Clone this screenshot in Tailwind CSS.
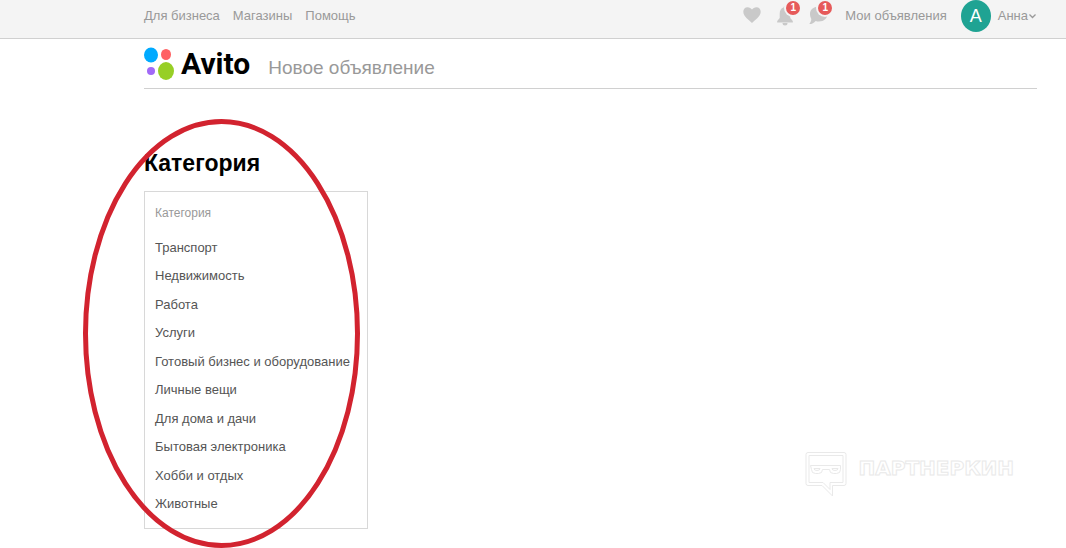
<!DOCTYPE html>
<html lang="ru">
<head>
  <meta charset="UTF-8">
  <meta name="viewport" content="width=device-width, initial-scale=1.0">
  <title>Новое объявление</title>
  <script src="https://cdn.jsdelivr.net/npm/@tailwindcss/browser@4"></script>
</head>
<body class="relative min-h-screen overflow-x-hidden bg-white font-['Liberation_Sans',Arial,sans-serif]">
  <header class="border-b border-[#d0d0d0] bg-[#f4f4f4] pl-36 pr-[29px] text-[13px] text-[#999]">
    <div class="flex h-[38px] justify-between">
      <nav class="flex gap-[13px] pt-1">
        <a href="#" class="leading-6">Для бизнеса</a>
        <a href="#" class="leading-6">Магазины</a>
        <a href="#" class="leading-6">Помощь</a>
      </nav>
      <div class="flex pt-1">
        <a href="#" aria-label="Избранное" class="mr-4 pt-[3px]">
          <svg class="h-4 w-[18px]" viewBox="0 0 18 16" fill="#c9c9c9"><path d="M9 16C6.500 13.500.3 9.500.3 4.800.3 2 2 .2 4.500.2 6.500.2 8.200 1.200 9 2.500 9.800 1.200 11.500.2 13.500.2 16 .2 17.700 2 17.700 4.800 17.700 9.500 11.500 13.500 9 16z"/></svg>
        </a>
        <a href="#" aria-label="Уведомления" class="relative mr-4">
          <svg class="h-[22px] w-4" viewBox="0 0 16 22" fill="#c9c9c9"><path d="M8 2c.8 0 1.400.6 1.400 1.400C12 4.200 13.300 6.500 13.300 9.500V14l2.500 3v1.500H.2V17l2.500-3V9.500c0-3 1.300-5.300 3.900-6.100C6.600 2.600 7.200 2 8 2z"/><path d="M5.500 19h5a2.500 2.500 0 0 1-5 0z"/></svg>
          <span class="absolute -right-[7px] -top-[3px] size-[14px] rounded-full bg-[#e65a5a] text-center text-[10px] font-bold leading-[14px] text-white ring-2 ring-[#f4f4f4]">1</span>
        </a>
        <a href="#" aria-label="Сообщения" class="relative mr-4">
          <svg class="h-[22px] w-5" viewBox="0 0 20 22" fill="#c9c9c9"><path d="M10 2.500c5 0 8.500 3 8.500 7.300 0 4.500-3.500 7.700-8.500 7.700-1.300 0-2.200-.2-3.300-.6C5 19 3 20 .3 20c1.300-1.500 2-3.300 2-5C1.500 13.500 1 11.800 1 9.800c0-4.300 4-7.300 9-7.300z"/></svg>
          <span class="absolute -right-[3px] -top-[3px] size-[14px] rounded-full bg-[#e65a5a] text-center text-[10px] font-bold leading-[14px] text-white ring-2 ring-[#f4f4f4]">1</span>
        </a>
        <a href="#" class="mr-[14px] leading-6">Мои объявления</a>
        <span class="-mt-1 mr-[7px] h-8 w-[30px] rounded-[50%] bg-[#1fa393] text-center text-lg leading-8 text-white">А</span>
        <button type="button" class="flex h-6 items-center">Анна
          <svg class="h-2 w-[9px]" viewBox="0 0 9 8" fill="none" stroke="#999" stroke-width="1.300"><path d="M1.500 2.500l3 3 3-3"/></svg>
        </button>
      </div>
    </div>
  </header>

  <main class="pl-36 pr-[29px]">
    <div class="flex h-[50px] items-center border-b border-[#d0d0d0]">
      <a href="#" class="flex items-center gap-[6px]">
        <svg class="h-[34px] w-[31px]" viewBox="0 0 31 34"><ellipse cx="7" cy="8" rx="7" ry="7.500" fill="#0af"/><ellipse cx="22" cy="7.500" rx="5" ry="5.500" fill="#ff6163"/><circle cx="7" cy="24" r="4" fill="#a169f7"/><ellipse cx="22" cy="24" rx="8" ry="9" fill="#97cf26"/></svg>
        <span class="font-[Roboto,sans-serif] text-[30px] font-bold leading-8 text-black">Avito</span>
      </a>
      <span class="ml-[18px] mt-2 text-[19px] leading-7 text-[#999]">Новое объявление</span>
    </div>

    <h1 class="mt-[58px] text-[23px] font-bold leading-8 text-black">Категория</h1>
    <section class="mt-3 w-56 border border-[#d8d8d8] px-[10px] pb-[14px] pt-[11px] text-[13px] text-[#555]">
      <h2 class="text-xs leading-5 text-[#999]">Категория</h2>
      <ul class="mt-[15px] flex h-[276px] flex-col justify-between whitespace-nowrap leading-5">
        <li><a href="#">Транспорт</a></li>
        <li><a href="#">Недвижимость</a></li>
        <li><a href="#">Работа</a></li>
        <li><a href="#">Услуги</a></li>
        <li><a href="#">Готовый бизнес и оборудование</a></li>
        <li><a href="#">Личные вещи</a></li>
        <li><a href="#">Для дома и дачи</a></li>
        <li><a href="#">Бытовая электроника</a></li>
        <li><a href="#">Хобби и отдых</a></li>
        <li><a href="#">Животные</a></li>
      </ul>
    </section>
  </main>

  <!-- выделение блока категорий -->
  <svg class="pointer-events-none absolute left-[82px] top-[118px] h-[430px] w-[280px]" viewBox="0 0 280 430" fill="none" stroke="#d2232f" stroke-width="5"><ellipse cx="139.500" cy="215.500" rx="136" ry="212"/></svg>

  <!-- водяной знак -->
  <div class="pointer-events-none absolute right-[52px] top-[451px] flex gap-3">
    <svg class="h-[46px] w-[42px]" viewBox="0 0 42 46" fill="none" stroke="#e9e9e9"><path d="M3 1.500h36q2 0 2 2v29q0 2-2 2H27.500V45L17 34.500H3q-2 0-2-2v-29q0-2 2-2z"/><path d="M4 4.500h34v27H25v7l-7-7H4z"/><path d="M5.500 14.500h30v4q0 4-4 4h-3q-4 0-4-4h-7q0 4-4 4h-3q-4 0-4-4z"/><path d="M9 17.500h6q0 2-3 2t-3-2zM27 17.500h6q0 2-3 2t-3-2z"/></svg>
    <span class="font-['DejaVu_Sans',sans-serif] text-xl font-bold leading-[34px] text-white [-webkit-text-stroke:1px_#e9e9e9]">ПАРТНЕРКИН</span>
  </div>
</body>
</html>
